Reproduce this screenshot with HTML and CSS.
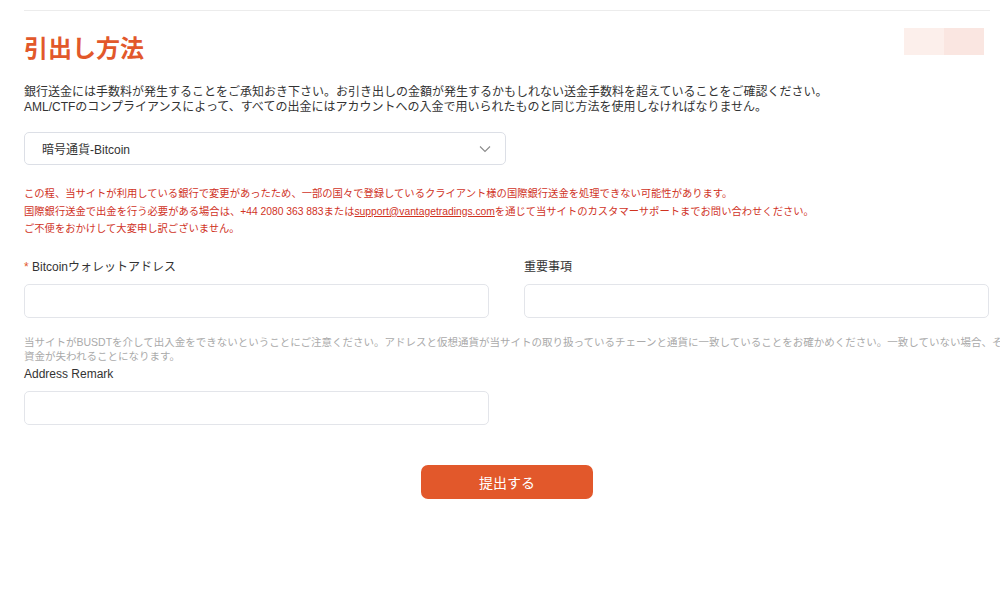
FILE: index.html
```html
<!DOCTYPE html>
<html lang="ja">
<head>
    <meta charset="UTF-8">
    <meta name="viewport" content="width=device-width, initial-scale=1.0">
    <title>引出し方法</title>
    <link rel="stylesheet" href="styles.css">
</head>
<body>

    <div class="page">
        <div class="header">
            <h1 class="title">引出し方法</h1>
            <div class="badge">
                <span class="badge-part light"></span>
                <span class="badge-part dark"></span>
            </div>
        </div>

        <p class="intro">
            銀行送金には手数料が発生することをご承知おき下さい。お引き出しの金額が発生するかもしれない送金手数料を超えていることをご確認ください。<br>
            AML/CTFのコンプライアンスによって、すべての出金にはアカウントへの入金で用いられたものと同じ方法を使用しなければなりません。
        </p>

        <div class="select">
            <span class="select-value">暗号通貨-Bitcoin</span>
            <svg class="select-arrow" width="12" height="8" viewBox="0 0 12 8">
                <path d="M1 1.5 L6 6.5 L11 1.5" fill="none" stroke="#8a8a8a" stroke-width="1.1"/>
            </svg>
        </div>

        <div class="notice">
            <p>この程、当サイトが利用している銀行で変更があったため、一部の国々で登録しているクライアント様の国際銀行送金を処理できない可能性があります。</p>
            <p>国際銀行送金で出金を行う必要がある場合は、+44 2080 363 883または<a href="#">support@vantagetradings.com</a>を通じて当サイトのカスタマーサポートまでお問い合わせください。</p>
            <p>ご不便をおかけして大変申し訳ございません。</p>
        </div>

        <form class="form">
            <div class="row">
                <div class="field">
                    <label class="label"><span class="required">*</span> Bitcoinウォレットアドレス</label>
                    <input class="input" type="text">
                </div>
                <div class="field">
                    <label class="label">重要事項</label>
                    <input class="input" type="text">
                </div>
            </div>

            <div class="hint">
                <span class="hint-line">当サイトがBUSDTを介して出入金をできないということにご注意ください。アドレスと仮想通貨が当サイトの取り扱っているチェーンと通貨に一致していることをお確かめください。一致していない場合、その</span>
                <span class="hint-line">資金が失われることになります。</span>
            </div>

            <div class="row">
                <div class="field">
                    <label class="label">Address Remark</label>
                    <input class="input" type="text">
                </div>
            </div>

            <div class="actions">
                <button class="submit" type="button">提出する</button>
            </div>
        </form>
    </div>

</body>
</html>
```

FILE: styles.css
```css
html, body {
    overflow: hidden;
}
body {
    margin: 0;
    background-color: #fff;
    font-family: "Liberation Sans", "Noto Sans CJK JP", sans-serif;
    color: #333;
}
.page {
    margin: 10px 10px 0 24px;
    border-top: 1px solid #ececec;
}
.header {
    display: flex;
    justify-content: space-between;
    align-items: flex-start;
}
.title {
    margin: 22px 0 0;
    font-size: 24px;
    line-height: 32px;
    font-weight: 700;
    color: #e2582b;
}
.badge {
    display: flex;
    margin-top: 17px;
    margin-right: 6px;
    height: 27px;
}
.badge-part {
    width: 40px;
}
.badge-part.light {
    background-color: #fcefeb;
}
.badge-part.dark {
    background-color: #fae6e1;
}
.intro {
    margin: 20px 0 0;
    font-size: 12px;
    line-height: 15px;
    color: #333;
}
.select {
    margin-top: 17px;
    height: 31px;
    border: 1px solid #dcdfe6;
    border-radius: 5px;
    display: flex;
    align-items: center;
    justify-content: space-between;
    padding: 0 14px 0 17px;
    width: 449px;
}
.select-value {
    font-size: 12px;
    color: #333;
}
.notice {
    margin-top: 20px;
    font-size: 10.3px;
    line-height: 17.5px;
    color: #d0331f;
}
.notice p {
    margin: 0;
}
.notice a {
    color: #d0331f;
    text-decoration: underline;
}
.form {
    margin-top: 20px;
}
.row {
    display: grid;
    grid-template-columns: 465px 465px;
    column-gap: 35px;
}
.field {
    display: flex;
    flex-direction: column;
}
.label {
    font-size: 12px;
    line-height: 18px;
    color: #333;
}
.required {
    color: #e2582b;
}
.input {
    margin-top: 8px;
    height: 34px;
    border: 1px solid #e3e5ea;
    border-radius: 5px;
    box-sizing: border-box;
    font: inherit;
    padding: 0 12px;
}
.hint {
    margin-top: 17px;
    font-size: 10.5px;
    line-height: 14px;
    color: #aaa;
}
.hint-line {
    display: block;
    white-space: nowrap;
}
.hint + .row .label {
    margin-top: 2px;
}
.actions {
    display: flex;
    justify-content: center;
    margin-top: 40px;
}
.submit {
    width: 172px;
    height: 34px;
    border: none;
    border-radius: 7px;
    background-color: #e2582b;
    color: #fff;
    font-family: inherit;
    font-size: 14px;
    cursor: pointer;
}
```
